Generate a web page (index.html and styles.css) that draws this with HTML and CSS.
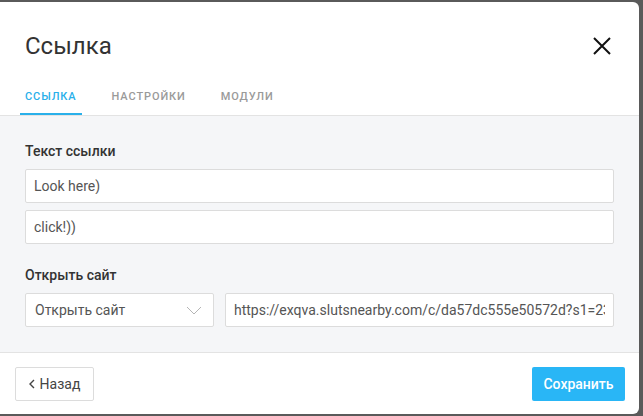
FILE: index.html
```html
<!DOCTYPE html>
<html lang="ru">
<head>
    <meta charset="UTF-8">
    <title>Ссылка</title>
    <link rel="stylesheet" href="styles.css">
</head>
<body>
    <div class="modal">
        <div class="modal-header">
            <div class="title-row">
                <div class="title">Ссылка</div>
                <button class="close-btn" aria-label="Закрыть">
                    <svg width="18" height="18" viewBox="0 0 18 18">
                        <path d="M1 1 L17 17 M17 1 L1 17" stroke="#111" stroke-width="2" fill="none"/>
                    </svg>
                </button>
            </div>
            <div class="tabs">
                <div class="tab active">Ссылка</div>
                <div class="tab">Настройки</div>
                <div class="tab">Модули</div>
            </div>
        </div>
        <div class="modal-body">
            <div class="label">Текст ссылки</div>
            <input type="text" class="field" value="Look here)">
            <input type="text" class="field" value="click!))">
            <div class="label label-second">Открыть сайт</div>
            <div class="field-row">
                <div class="select">
                    <span>Открыть сайт</span>
                    <svg width="16" height="9" viewBox="0 0 16 9">
                        <path d="M1 1 L8 8 L15 1" stroke="#b5b5b5" stroke-width="1" fill="none"/>
                    </svg>
                </div>
                <input type="text" class="field url" value="https://exqva.slutsnearby.com/c/da57dc555e50572d?s1=2390">
            </div>
        </div>
        <div class="modal-footer">
            <button class="back-btn">
                <svg width="6" height="10" viewBox="0 0 6 10">
                    <path d="M5 1 L1 5 L5 9" stroke="#444" stroke-width="1.4" fill="none"/>
                </svg>
                Назад
            </button>
            <button class="save-btn">Сохранить</button>
        </div>
    </div>
</body>
</html>
```

FILE: styles.css
```css
body {
    margin: 0;
    padding-top: 2px;
    background-color: #5a5a5a;
    font-family: Roboto, "Liberation Sans", sans-serif;
    height: 414px;
    overflow: hidden;
}
.modal {
    width: 639px;
    height: 412px;
    background-color: #fff;
    border-radius: 0 6px 6px 0;
    display: flex;
    flex-direction: column;
    overflow: hidden;
}
.modal-header {
    padding: 28px 25px 0 25px;
    border-bottom: 1px solid #e3e3e3;
}
.title-row {
    display: flex;
    justify-content: space-between;
    align-items: center;
}
.title {
    font-size: 24px;
    line-height: 32px;
    color: #333;
}
.close-btn {
    border: none;
    background: none;
    padding: 0;
    margin-right: 3px;
    cursor: pointer;
    display: flex;
}
.tabs {
    display: flex;
    margin-top: 28px;
    margin-left: -5px;
}
.tab {
    font-size: 11px;
    line-height: 13px;
    font-weight: 500;
    letter-spacing: 0.9px;
    text-transform: uppercase;
    color: #9a9a9a;
    padding: 0 5px 10px 5px;
    margin-right: 25px;
    border-bottom: 2px solid transparent;
}
.tab.active {
    color: #29b0ea;
    border-bottom-color: #29b0ea;
}
.modal-body {
    flex: 1;
    background-color: #f5f6f8;
    padding: 27px 25px 0 25px;
    border-bottom: 1px solid #e3e3e3;
}
.label {
    font-size: 14px;
    font-weight: 500;
    color: #333;
    line-height: 16px;
    margin-bottom: 10px;
}
.label-second {
    margin-top: 23px;
}
.field {
    display: block;
    width: 100%;
    height: 34px;
    padding: 0 8px;
    border: 1px solid #dcdcdc;
    border-radius: 2px;
    background-color: #fff;
    font-family: Roboto, "Liberation Sans", sans-serif;
    font-size: 14px;
    color: #555;
    box-sizing: border-box;
    margin-bottom: 7px;
    outline: none;
}
.field-row {
    display: flex;
    gap: 11px;
}
.select {
    width: 189px;
    height: 34px;
    padding: 0 11px 0 9px;
    border: 1px solid #dcdcdc;
    border-radius: 2px;
    background-color: #fff;
    box-sizing: border-box;
    display: flex;
    align-items: center;
    justify-content: space-between;
    font-size: 14px;
    color: #555;
}
.url {
    flex: 1;
    margin-bottom: 0;
}
.modal-footer {
    display: flex;
    justify-content: space-between;
    align-items: center;
    padding: 0 14px 0 15px;
    height: 61px;
}
.back-btn {
    height: 34px;
    width: 79px;
    border: 1px solid #dcdcdc;
    border-radius: 2px;
    background-color: #fff;
    font-family: Roboto, "Liberation Sans", sans-serif;
    font-size: 14px;
    color: #444;
    cursor: pointer;
    display: flex;
    align-items: center;
    justify-content: center;
    gap: 5px;
}
.save-btn {
    height: 34px;
    width: 93px;
    border: none;
    border-radius: 2px;
    background-color: #29b6f6;
    color: #fff;
    font-family: Roboto, "Liberation Sans", sans-serif;
    font-size: 14px;
    font-weight: 500;
    cursor: pointer;
}
```
